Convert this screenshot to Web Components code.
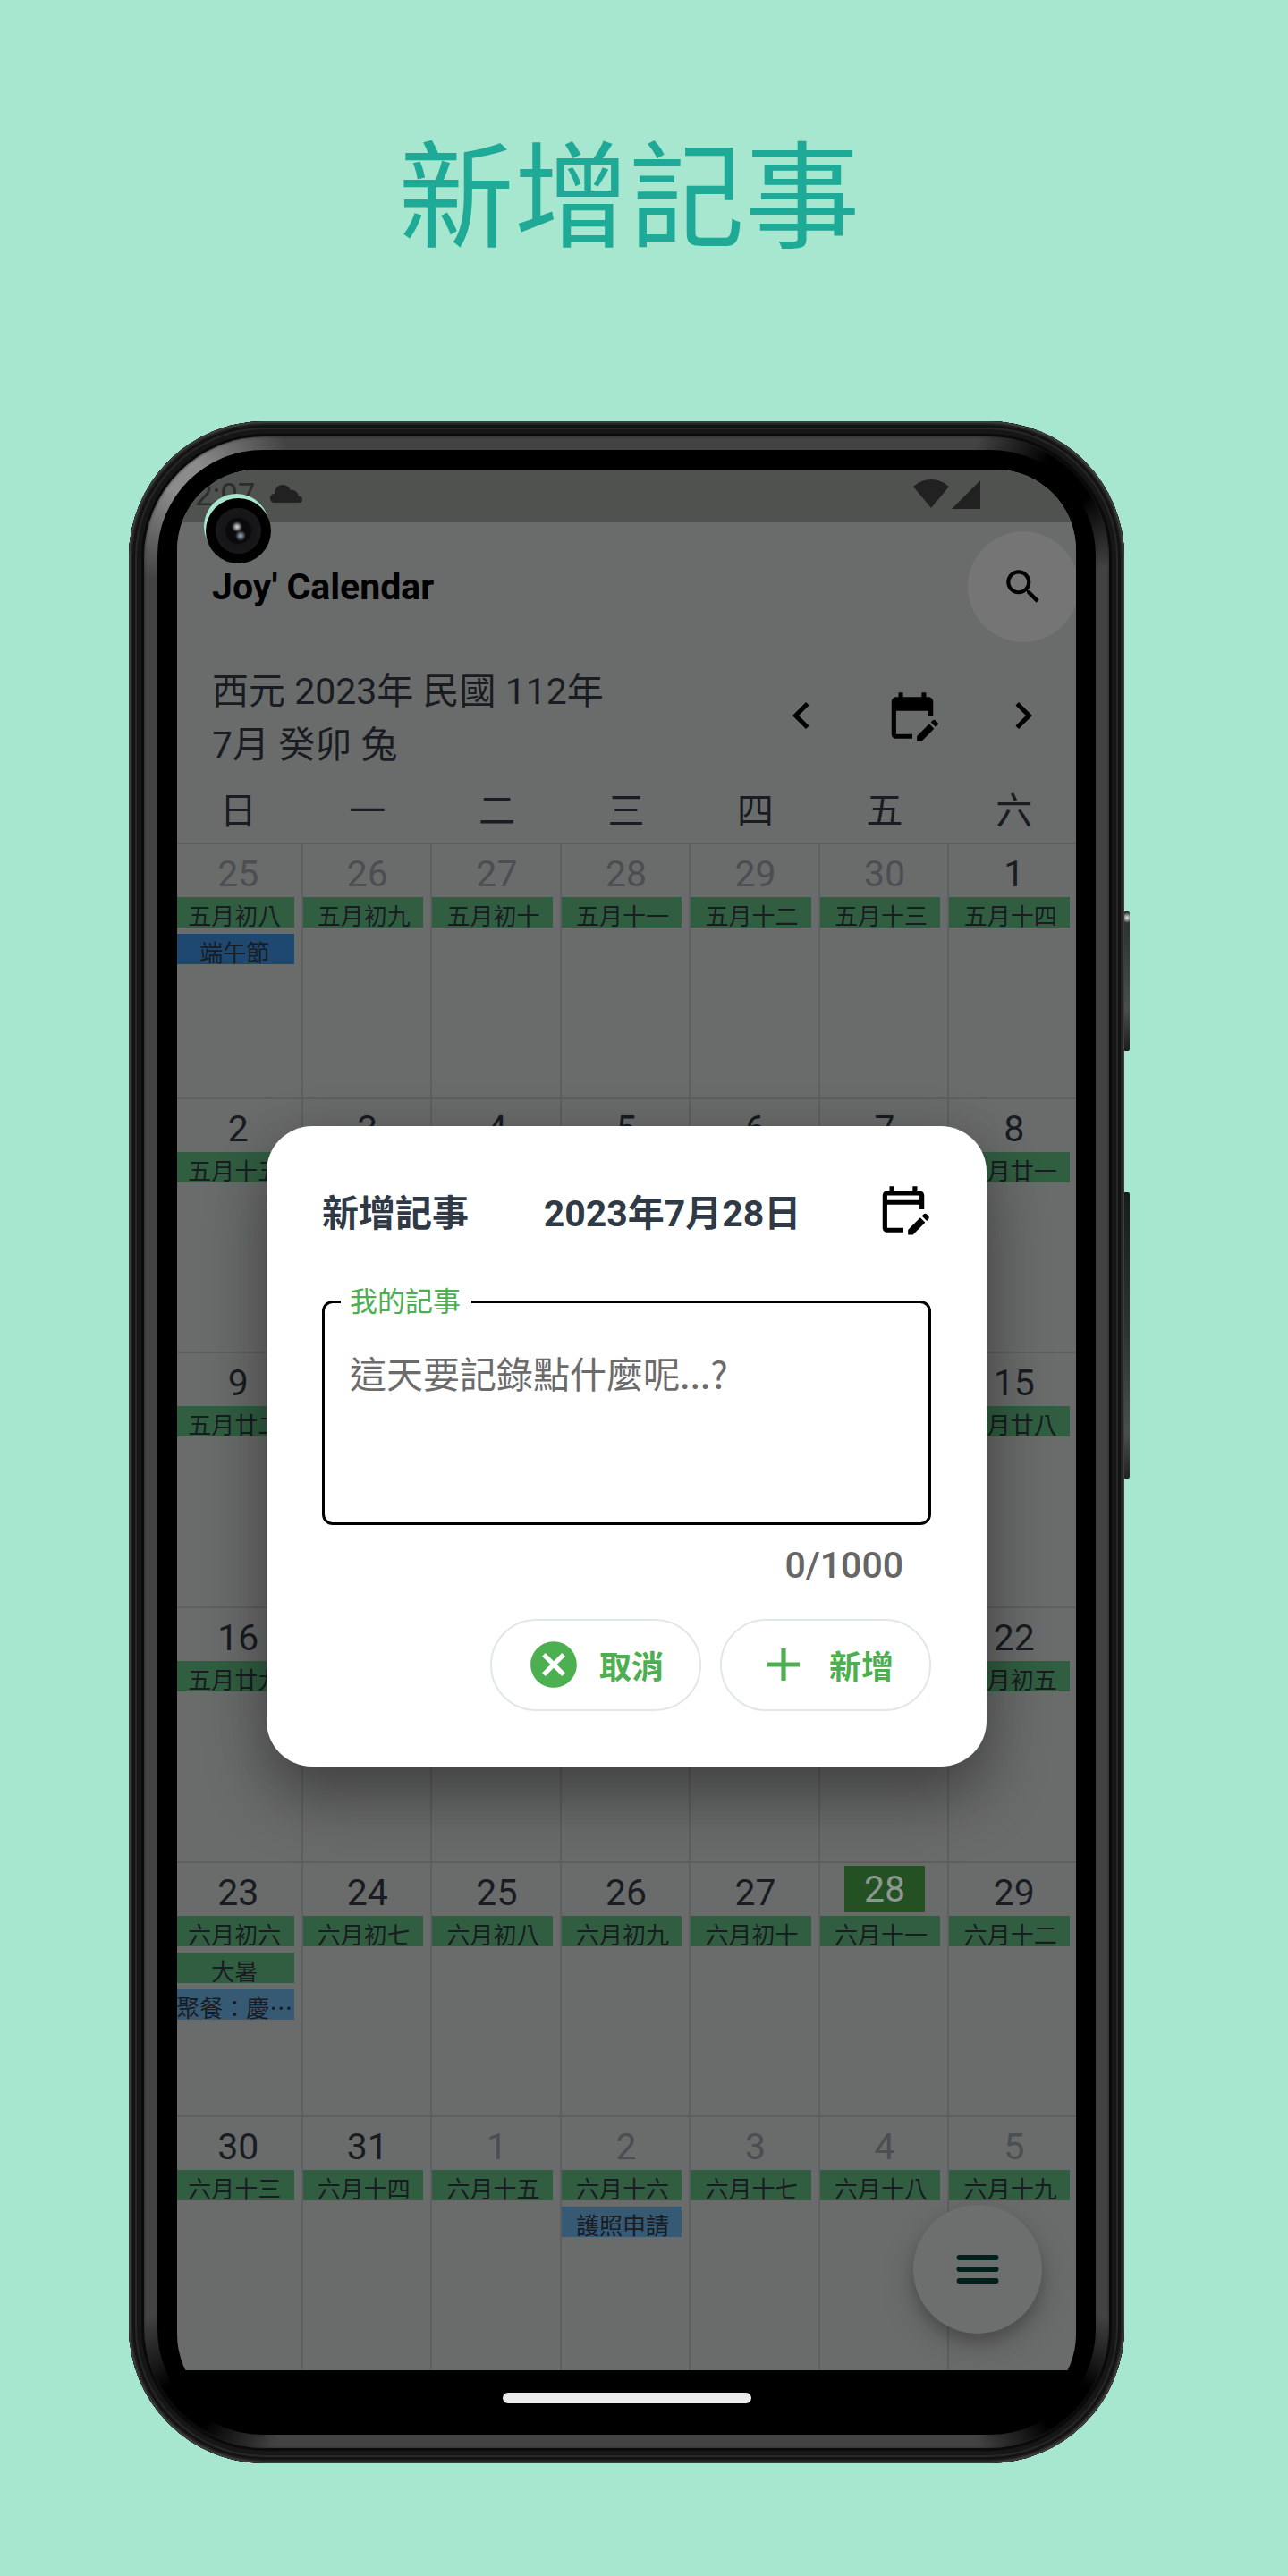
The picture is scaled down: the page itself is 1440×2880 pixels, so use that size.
<!DOCTYPE html>
<html lang="zh-Hant">
<head>
<meta charset="utf-8">
<title>Joy' Calendar</title>
<style>
  :root {
    --mint: #a8e7cf;
    --teal: #1fa997;
    --screen: #6a6c6b;
    --line: #5e605f;
    --ink: #191c22;
    --green: #4caf50;
  }
  html, body { margin: 0; background: var(--mint); }
  body { font-family: Roboto, "Noto Sans CJK TC", sans-serif; color: var(--ink); }
</style>
</head>
<body>
<promo-page>
  <h1 slot="title">新增記事</h1>
  <phone-frame>
    <status-bar></status-bar>
    <app-bar>Joy' Calendar</app-bar>
    <month-bar>西元 2023年 民國 112年<br>7月 癸卯 兔</month-bar>
    <month-grid></month-grid>
    <menu-fab slot="over"></menu-fab>
    <note-dialog slot="over"></note-dialog>
  </phone-frame>
</promo-page>

<script>
const define = (name, html) => {
  const template = document.createElement('template');
  template.innerHTML = html;
  customElements.define(name, class extends HTMLElement {
    constructor() {
      super();
      this.attachShadow({ mode: 'open' }).append(template.content.cloneNode(true));
    }
  });
};

const icon = (body, size) =>
  `<svg viewBox="0 0 24 24" width="${size}" height="${size}" fill="currentColor" aria-hidden="true">${body}</svg>`;
const pencil = '<path d="M22.13 16.99l.71-.71c.39-.39.39-1.02 0-1.41l-.71-.71c-.39-.39-1.02-.39-1.41 0l-.71.71 2.12 2.12zM21.42 17.7l-5.3 5.3H14v-2.12l5.3-5.3 2.12 2.12z"/>';
const calendarFilled = '<path d="M12 22H5c-1.11 0-2-.9-2-2L3.01 6c0-1.1.88-2 1.99-2h1V2h2v2h8V2h2v2h1c1.1 0 2 .9 2 2v6h-2v-2H5v10h7v2z"/>' + pencil;
const calendarOutlined = '<path d="M12 22H5c-1.11 0-2-.9-2-2L3.01 6c0-1.1.88-2 1.99-2h1V2h2v2h8V2h2v2h1c1.1 0 2 .9 2 2v6h-2v-2H5v10h7v2zM19 8V6H5v2h14z"/>' + pencil;
const resetButton = `button { appearance: none; border: 0; margin: 0; padding: 0; background: none; color: inherit; font: inherit; cursor: pointer; }
  svg { display: block; }`;

define('promo-page', `
  <style>
    :host { display: flex; flex-direction: column; min-height: 2880px; box-sizing: border-box; padding: 115px 183px 0 144px; }
    ::slotted(h1) { margin: 0 0 164px; padding-left: 6px; font-size: 129px; line-height: 192px; font-weight: 400; text-align: center; color: var(--teal); font-family: "Noto Sans CJK TC", sans-serif; }
  </style>
  <slot name="title"></slot>
  <slot></slot>`);

define('phone-frame', `
  <style>
    :host { display: block; position: relative; }
    .shell {
      position: relative; padding: 17px; border-radius: 152px; background: #151515;
      box-shadow: inset 0 0 0 2px #3d3d3d, inset 0 0 0 4px #242424, inset 0 0 0 7px #131313, inset 0 0 0 9px #272727, inset 0 0 0 14px #161616, inset 0 0 0 17px #0a0a0a;
    }
    .ring {
      padding: 15px; border-radius: 135px;
      background:
        radial-gradient(circle at 45px 45px, #8c8c8c 20px, transparent 120px),
        radial-gradient(circle at calc(100% - 45px) 45px, #000 30px, transparent 110px),
        radial-gradient(circle at 45px calc(100% - 45px), #000 30px, transparent 110px),
        radial-gradient(circle at calc(100% - 45px) calc(100% - 45px), #000 30px, transparent 110px),
        #434343;
      box-shadow: inset 0 0 3px #262626;
    }
    .bezel { padding: 22px; border-radius: 118px; background: #000; }
    .screen { position: relative; overflow: hidden; border-radius: 90px; background: linear-gradient(var(--screen) 90%, #000 90%); }
    .content { margin: 0 -3px 0 -4px; background: var(--screen); }
    .navigation { display: flex; justify-content: center; align-items: center; box-sizing: border-box; height: 50px; padding-top: 12px; background: #000; }
    .navigation i { width: 278px; height: 12px; border-radius: 6px; background: #ebebeb; }
    .side { position: absolute; left: 100%; width: 6px; border-radius: 0 2px 2px 0; }
    .power { top: 548px; height: 156px; background: radial-gradient(circle at 3px 7px, #e8e8e8, transparent 6px), linear-gradient(#2c2d2f, #4c4d50 70%, #1c1c1c); }
    .volume { top: 862px; height: 320px; background: linear-gradient(#1a1b1c, #313234 50%, #4c4d50 84%, #222); }
    .hole { position: absolute; left: 84px; top: 81px; width: 73px; height: 73px; border-radius: 50%; background: var(--mint); }
    .camera { position: absolute; left: 86px; top: 86px; width: 73px; height: 73px; border-radius: 50%;
      background:
        radial-gradient(circle at 35px 32px, #c4c6cc 1px, transparent 6px),
        radial-gradient(circle at 39px 42px, #8a9aa6 1px, transparent 6px),
        radial-gradient(circle, #0a0a0c 14px, #151517 15px, #18181a 25px, #000 26px); }
  </style>
  <div class="side power"></div>
  <div class="side volume"></div>
  <div class="shell"><div class="ring"><div class="bezel">
    <div class="screen">
      <div class="content"><slot></slot></div>
      <div class="navigation"><i></i></div>
      <slot name="over"></slot>
    </div>
  </div></div>
    <div class="hole"></div><div class="camera"></div>
  </div>`);

define('status-bar', `
  <style>
    :host { display: flex; align-items: flex-start; height: 59px; box-sizing: border-box; padding: 8px 110px 0 24px; background: #505250; color: #212121; font-size: 35px; line-height: 42px; }
    .time { color: #2b2d2c; }
    svg { display: block; }
    .cloud { margin: 9px auto 0 16px; }
    .wifi { margin: 3px 3px 0 0; }
    .signal { margin-top: 4px; }
  </style>
  <span class="time">2:07</span>
  <svg class="cloud" width="36" height="20" viewBox="0 0 36 20" fill="currentColor"><path d="M5 20C2 20 0 18 0 15c0-3 2-5 5-5C5 4 9 0 14 0c4 0 7 2 9 6 4-1 8 2 9 7 3 0 4 2 4 4 0 2-2 3-4 3z"/></svg>
  <svg class="wifi" width="40" height="32" viewBox="0 0 40 32" fill="currentColor"><path d="M20 32L0 8C6 3 12 0 20 0s14 3 20 8z"/></svg>
  <svg class="signal" width="32" height="32" viewBox="0 0 32 32" fill="currentColor"><path d="M32 0v32H0z"/></svg>`);

define('app-bar', `
  <style>
    :host { display: flex; align-items: center; justify-content: space-between; height: 144px; padding-left: 43px; color: #000; }
    h2 { margin: 0; font-size: 41px; line-height: 60px; font-weight: 700; }
    ${resetButton}
    button { display: grid; place-items: center; width: 124px; height: 124px; border-radius: 50%; background: #757575; }
  </style>
  <h2><slot></slot></h2>
  <button aria-label="搜尋">${icon('<path d="M15.5 14h-.79l-.28-.27C15.41 12.59 16 11.11 16 9.5 16 5.91 13.09 3 9.5 3S3 5.91 3 9.5 5.91 16 9.5 16c1.61 0 3.09-.59 4.23-1.57l.27.28v.79l5 4.99L20.49 19l-4.99-5zm-6 0C7.01 14 5 11.99 5 9.5S7.01 5 9.5 5 14 7.01 14 9.5 11.99 14 9.5 14z"/>', 50)}</button>`);

define('month-bar', `
  <style>
    :host { display: flex; align-items: center; justify-content: space-between; height: 144px; padding-left: 43px; }
    p { margin: 0; padding-top: 6px; font-size: 41px; line-height: 60px; }
    nav { display: flex; color: #000; }
    ${resetButton}
    button { display: grid; place-items: center; width: 124px; height: 124px; }
  </style>
  <p><slot></slot></p>
  <nav>
    <button aria-label="上個月">${icon('<path d="M15.41 7.41L14 6l-6 6 6 6 1.41-1.41L10.83 12z"/>', 60)}</button>
    <button aria-label="選擇日期">${icon(calendarFilled, 62)}</button>
    <button aria-label="下個月">${icon('<path d="M10 6L8.59 7.41 13.17 12l-4.58 4.59L10 18l6-6z"/>', 60)}</button>
  </nav>`);

const weeks = [
  [['25','五月初八','h:端午節'],['26','五月初九'],['27','五月初十'],['28','五月十一'],['29','五月十二'],['30','五月十三'],['1','五月十四']],
  [['2','五月十五'],['3','五月十六'],['4','五月十七'],['5','五月十八'],['6','五月十九'],['7','五月二十'],['8','五月廿一']],
  [['9','五月廿二'],['10','五月廿三'],['11','五月廿四'],['12','五月廿五'],['13','五月廿六'],['14','五月廿七'],['15','五月廿八']],
  [['16','五月廿九'],['17','五月三十'],['18','六月初一'],['19','六月初二'],['20','六月初三'],['21','六月初四'],['22','六月初五']],
  [['23','六月初六','大暑','n:聚餐：慶…'],['24','六月初七'],['25','六月初八'],['26','六月初九'],['27','六月初十'],['28','六月十一'],['29','六月十二']],
  [['30','六月十三'],['31','六月十四'],['1','六月十五'],['2','六月十六','n:護照申請'],['3','六月十七'],['4','六月十八'],['5','六月十九']],
];

define('event-chip', `
  <style>
    :host { display: block; height: 34px; padding-left: 2px; overflow: hidden; text-align: center; white-space: nowrap; background: #315e41; font-family: "Noto Sans CJK TC", sans-serif; font-size: 26px; line-height: 40px; font-weight: 400; }
    :host([kind="h"]) { background: #1f4870; }
    :host([kind="n"]) { background: #375a74; }
  </style>
  <slot></slot>`);

define('day-cell', `
  <style>
    :host { display: block; padding-top: 7px; }
    .number { display: block; margin-left: 2px; font-size: 41px; line-height: 52px; text-align: center; }
    .events { display: flex; flex-direction: column; gap: 7px; margin-right: 8px; }
    :host([outside]) .number { color: #4b4e52; }
    :host([today]) { padding: 3px 0 0 2px; }
    :host([today]) .number { width: 90px; margin: 0 auto 4px; background: #245124; color: #8e978e; }
    :host([today]) .events { margin-left: -2px; }
  </style>
  <span class="number"><slot name="number"></slot></span>
  <div class="events"><slot></slot></div>`);

define('month-grid', `
  <style>
    :host { display: block; }
    table { width: 100%; height: 1778px; table-layout: fixed; border-collapse: separate; border-spacing: 0; }
    th { height: 70px; padding: 0; font-size: 41px; line-height: 60px; font-weight: 400; }
    td { height: 284px; box-sizing: border-box; padding: 0; vertical-align: top; border-top: 2px solid var(--line); border-right: 2px solid var(--line); }
  </style>
  <table>
    <thead><tr>${[...'日一二三四五六'].map(d => `<th scope="col">${d}</th>`).join('')}</tr></thead>
    <tbody>${weeks.map((week, w) => `<tr>${week.map(([n, ...events]) => {
      const outside = (w === 0 && +n > 20) || (w === 5 && +n < 20) ? 'outside' : '';
      const today = w === 4 && n === '28' ? 'today' : '';
      return `<td><day-cell ${outside} ${today}><span slot="number">${n}</span>${events.map(e =>
        e[1] === ':' ? `<event-chip kind="${e[0]}">${e.slice(2)}</event-chip>` : `<event-chip>${e}</event-chip>`).join('')}</day-cell></td>`;
    }).join('')}</tr>`).join('')}</tbody>
  </table>`);

define('menu-fab', `
  <style>
    :host { position: absolute; right: 38px; bottom: 91px; color: #00211b; }
    ${resetButton}
    button { display: grid; place-items: center; width: 144px; height: 144px; border-radius: 50%; background: #6d6f6e; box-shadow: 0 10px 16px rgba(0,0,0,.2), 0 14px 40px rgba(0,0,0,.14); }
  </style>
  <button aria-label="選單"><svg width="48" height="34" viewBox="0 0 48 34" stroke="currentColor" stroke-width="6" stroke-linecap="round"><path d="M3.500 4h41M3.500 17h41M3.500 30h41"/></svg></button>`);

define('pill-button', `
  <style>
    :host { display: block; color: var(--green); font-size: 36px; line-height: 54px; font-weight: 700; }
    ${resetButton}
    button { display: flex; align-items: center; gap: 20px; box-sizing: border-box; height: 103px; padding: 0 40px 0 38px; border: 2px solid #e0e8e6; border-radius: 52px; }
    .label { padding-top: 8px; }
  </style>
  <button><slot name="icon"></slot><span class="label"><slot></slot></span></button>`);

define('note-dialog', `
  <style>
    :host { position: absolute; inset: 0; display: flex; align-items: center; padding: 8px 100px 0; }
    section { flex: 1; box-sizing: border-box; padding: 62px; border-radius: 51px; background: #fff; box-shadow: 0 40px 70px rgba(0,0,0,.3), 0 8px 60px rgba(0,0,0,.16); }
    header { display: flex; align-items: center; justify-content: space-between; height: 62px; color: #2f3a46; font-size: 41px; line-height: 62px; }
    h2, time { margin: 0; padding-top: 10px; font: inherit; line-height: 62px; font-weight: 700; }
    ${resetButton}
    header button { color: #000; }
    fieldset { min-width: 0; margin: 53px 0 0; padding: 0 28px 0 18px; border: 3px solid #000; border-radius: 12px; box-sizing: border-box; }
    legend { padding: 0 12px 0 10px; height: 40px; color: var(--green); font-size: 31px; line-height: 40px; font-weight: 400; }
    textarea { display: block; box-sizing: border-box; width: 100%; height: 226px; margin: 0; padding: 28px 0 0 10px; border: 0; outline: 0; resize: none; background: none; color: #000; font: 400 41px/60px "Noto Sans CJK TC", sans-serif; }
    textarea::placeholder { color: #6b6b6b; opacity: 1; }
    output { display: block; padding: 20px 31px 0 0; text-align: right; color: #666; font-size: 41px; line-height: 50px; font-weight: 500; }
    footer { display: flex; justify-content: flex-end; gap: 21px; margin-top: 35px; }
  </style>
  <section role="dialog" aria-labelledby="heading">
    <header>
      <h2 id="heading">新增記事</h2>
      <time datetime="2023-07-28">2023年7月28日</time>
      <button aria-label="選擇日期">${icon(calendarOutlined, 62)}</button>
    </header>
    <fieldset>
      <legend><label for="note">我的記事</label></legend>
      <textarea id="note" maxlength="1000" placeholder="這天要記錄點什麼呢...?"></textarea>
    </fieldset>
    <output for="note">0/1000</output>
    <footer>
      <pill-button><span slot="icon">${icon('<path d="M12 2C6.47 2 2 6.47 2 12s4.470 10 10 10 10-4.470 10-10S17.530 2 12 2zm5 13.590L15.590 17 12 13.410 8.410 17 7 15.590 10.590 12 7 8.410 8.410 7 12 10.590 15.590 7 17 8.410 13.410 12 17 15.590z"/>', 62)}</span>取消</pill-button>
      <pill-button><span slot="icon">${icon('<path d="M19 13h-6v6h-2v-6H5v-2h6V5h2v6h6v2z"/>', 62)}</span>新增</pill-button>
    </footer>
  </section>`);
</script>
</body>
</html>
